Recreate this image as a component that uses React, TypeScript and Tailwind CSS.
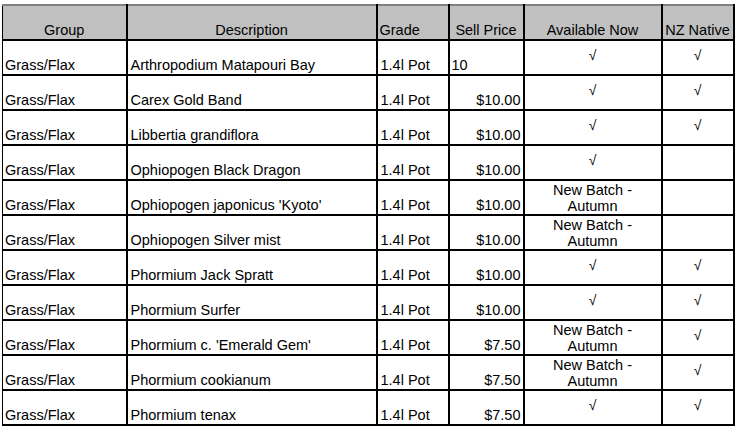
import React from 'react';

type Row = {
  desc: string;
  price: string;
  avail: 'yes' | 'batch';
  native: boolean;
};

const rows: Row[] = [
  { desc: 'Arthropodium Matapouri Bay', price: '10', avail: 'yes', native: true },
  { desc: 'Carex Gold Band', price: '$10.00', avail: 'yes', native: true },
  { desc: 'Libbertia grandiflora', price: '$10.00', avail: 'yes', native: true },
  { desc: 'Ophiopogen Black Dragon', price: '$10.00', avail: 'yes', native: false },
  { desc: "Ophiopogen japonicus 'Kyoto'", price: '$10.00', avail: 'batch', native: false },
  { desc: 'Ophiopogen Silver mist', price: '$10.00', avail: 'batch', native: false },
  { desc: 'Phormium Jack Spratt', price: '$10.00', avail: 'yes', native: true },
  { desc: 'Phormium Surfer', price: '$10.00', avail: 'yes', native: true },
  { desc: "Phormium c. 'Emerald Gem'", price: '$7.50', avail: 'batch', native: true },
  { desc: 'Phormium cookianum', price: '$7.50', avail: 'batch', native: true },
  { desc: 'Phormium tenax', price: '$7.50', avail: 'yes', native: true },
];

const td = 'border-2 border-black p-0';
const th = 'border-x-2 border-b-2 border-black p-0 font-normal';
const bottom = 'h-[33px] flex items-end pb-[1px] leading-[16px] whitespace-nowrap';
const middle = 'h-[33px] flex items-center justify-center leading-[16px] text-center';

const Tick = () => <span className="text-[14px] leading-none pb-[6px]">√</span>;

export default function App() {
  return (
    <div className="w-[739px] h-[429px] bg-white pl-[2px] pt-[4px]" style={{ fontFamily: '"Liberation Sans", Arial, sans-serif' }}>
      <table className="table-fixed border-collapse text-[14.5px] text-black">
        <colgroup>
          <col className="w-[124px]" />
          <col className="w-[250px]" />
          <col className="w-[72px]" />
          <col className="w-[75px]" />
          <col className="w-[138px]" />
          <col className="w-[72px]" />
        </colgroup>
        <thead>
          <tr className="bg-[#c0c0c0] border-t-2 border-[#808080]">
            <th className={`${th} !border-l`}><div className={`${bottom} justify-center`}>Group</div></th>
            <th className={th}><div className={`${bottom} justify-center`}>Description</div></th>
            <th className={th}><div className={`${bottom} justify-start pl-[2px]`}>Grade</div></th>
            <th className={th}><div className={`${bottom} justify-center`}>Sell Price</div></th>
            <th className={th}><div className={`${bottom} justify-center`}>Available Now</div></th>
            <th className={th}><div className={`${bottom} justify-center`}>NZ Native</div></th>
          </tr>
        </thead>
        <tbody>
          {rows.map((r) => (
            <tr key={r.desc}>
              <td className={`${td} !border-l`}><div className={`${bottom} pl-[2px]`}>Grass/Flax</div></td>
              <td className={td}><div className={`${bottom} pl-[3px]`}>{r.desc}</div></td>
              <td className={td}><div className={`${bottom} pl-[3px]`}>1.4l Pot</div></td>
              <td className={td}>
                <div className={`${bottom} ${r.price.startsWith('$') ? 'justify-end pr-[2px]' : 'justify-start pl-[2px]'}`}>{r.price}</div>
              </td>
              <td className={td}>
                {r.avail === 'yes' ? (
                  <div className={middle}><Tick /></div>
                ) : (
                  <div className={middle}>New Batch -<br />Autumn</div>
                )}
              </td>
              <td className={td}>
                <div className={middle}>{r.native ? <Tick /> : null}</div>
              </td>
            </tr>
          ))}
        </tbody>
      </table>
    </div>
  );
}
